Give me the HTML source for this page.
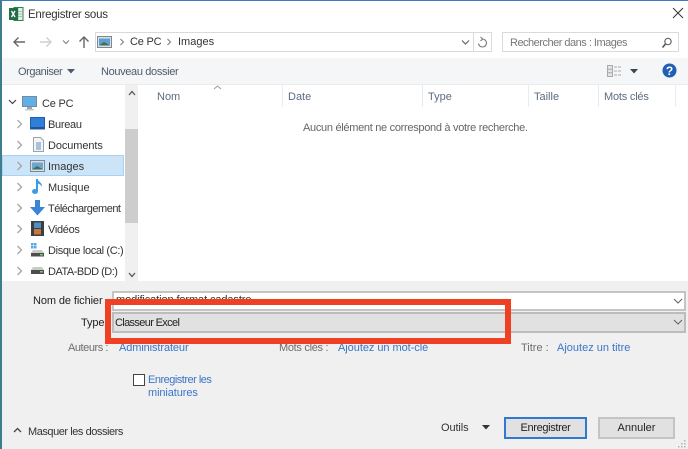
<!DOCTYPE html>
<html><head><meta charset="utf-8">
<style>
html,body{margin:0;padding:0;background:#fff}
#r{position:relative;width:688px;height:449px;overflow:hidden;background:#fff;font-family:"Liberation Sans",sans-serif;font-size:11px;color:#222}
#r div,#r svg{position:absolute}
.t{white-space:nowrap;line-height:14px;filter:blur(.3px)}
.g{color:#6d6d6d}
.l{color:#3a75c8}
.b{border:2px solid #c8c8c8;box-sizing:border-box}
.sep{width:1px;height:22px;top:85px;background:#e8ebf0}
.ch{top:90px;color:#5d6b80;font-size:11px}
</style></head><body>
<div id="r">
<div style="left:0;top:0;width:688px;height:1px;background:#3a7cc2"></div>
<div style="left:0;top:0;width:2px;height:449px;background:#3f7d8c"></div>

<!-- title -->
<svg style="left:8px;top:6px" width="16" height="16" viewBox="0 0 16 16"><rect x="6" y="1.5" width="9" height="13" fill="#e6efe8" stroke="#2f7d50"/><path d="M10 2v12M6 5.5h9M6 8h9M6 10.5h9" stroke="#8db79c" stroke-width=".8"/><rect x="1" y="2" width="9" height="12" fill="#1f7145"/><path d="M3.5 5l3.500 6M7 5l-3.500 6" stroke="#fff" stroke-width="1.300"/></svg>
<div class="t" style="left:28px;top:8px;font-size:11.5px;color:#333;letter-spacing:-.25px">Enregistrer sous</div>
<svg style="left:672px;top:7px" width="12" height="12" viewBox="0 0 12 12"><path d="M1 1l10 10M11 1L1 11" stroke="#333" stroke-width="1"/></svg>

<!-- nav -->
<svg style="left:12px;top:35px" width="14" height="14" viewBox="0 0 14 14"><path d="M13 7H2M6.500 2.500L2 7l4.500 4.500" fill="none" stroke="#666" stroke-width="1.400"/></svg>
<svg style="left:39px;top:35px" width="14" height="14" viewBox="0 0 14 14"><path d="M1 7h11M7.500 2.500L12 7l-4.500 4.500" fill="none" stroke="#cfcfcf" stroke-width="1.400"/></svg>
<svg style="left:62px;top:38px" width="8" height="8" viewBox="0 0 8 8"><path d="M1 2.500l3 3 3-3" fill="none" stroke="#888" stroke-width="1.200"/></svg>
<svg style="left:77px;top:35px" width="14" height="14" viewBox="0 0 14 14"><path d="M7 13V2M2.500 6.500L7 2l4.500 4.500" fill="none" stroke="#666" stroke-width="1.400"/></svg>

<div style="left:95px;top:32px;width:397px;height:20px;box-sizing:border-box;border:1px solid #dadada;background:#fff"></div>
<div style="left:473px;top:33px;width:1px;height:18px;background:#dadada"></div>
<svg style="left:97px;top:36px" width="15" height="12" viewBox="0 0 15 12"><rect x=".5" y=".5" width="14" height="11" fill="#d9dfe6" stroke="#7d8894"/><rect x="2" y="2.500" width="11" height="7" fill="#5f9fd0"/><path d="M2 9.500L7 6l6 3.500z" fill="#3f6f4f"/></svg>
<svg style="left:119px;top:38px" width="6" height="8" viewBox="0 0 6 8"><path d="M1.500 1l3 3-3 3" fill="none" stroke="#777" stroke-width="1"/></svg>
<div class="t" style="left:130px;top:35px;color:#333;letter-spacing:-.2px">Ce PC</div>
<svg style="left:166px;top:38px" width="6" height="8" viewBox="0 0 6 8"><path d="M1.500 1l3 3-3 3" fill="none" stroke="#777" stroke-width="1"/></svg>
<div class="t" style="left:178px;top:35px;color:#333">Images</div>
<svg style="left:461px;top:39px" width="9" height="7" viewBox="0 0 9 7"><path d="M1 1.500l3.500 3.500L8 1.500" fill="none" stroke="#666" stroke-width="1.200"/></svg>
<svg style="left:477px;top:36px" width="11" height="13" viewBox="0 0 11 13"><path d="M5.500 3a4 4 0 1 1-4 4.500M3.500 1l2.200 2-2.200 2" fill="none" stroke="#777" stroke-width="1.100"/></svg>

<div style="left:502px;top:32px;width:177px;height:20px;box-sizing:border-box;border:1px solid #dadada;background:#fff"></div>
<div class="t g" style="left:510px;top:36px;color:#777;letter-spacing:-.5px">Rechercher dans : Images</div>
<svg style="left:661px;top:37px" width="12" height="12" viewBox="0 0 12 12"><circle cx="7" cy="4.500" r="3.200" fill="none" stroke="#666" stroke-width="1.200"/><path d="M4.500 7L1.500 10.500" stroke="#555" stroke-width="1.600"/></svg>

<!-- toolbar -->
<div style="left:2px;top:58px;width:686px;height:26px;background:#f5f6f7"></div>
<div style="left:2px;top:84px;width:686px;height:1px;background:#e9ebee"></div>
<div class="t" style="left:18px;top:65px;color:#4c5a6e;letter-spacing:-.45px">Organiser</div>
<svg style="left:67px;top:69px" width="8" height="5" viewBox="0 0 8 5"><path d="M0 0h8L4 4.500z" fill="#4c5a6e"/></svg>
<div class="t" style="left:101px;top:65px;color:#4c5a6e;letter-spacing:-.35px">Nouveau dossier</div>
<svg style="left:607px;top:65px" width="16" height="12" viewBox="0 0 16 12"><rect x=".5" y=".5" width="5" height="11" fill="#e4e4e4" stroke="#aaa"/><path d="M.5 4.200h5M.5 7.800h5" stroke="#aaa"/><path d="M7 2h8M7 6h8M7 10h8" stroke="#aaa" stroke-dasharray="3 1"/></svg>
<svg style="left:630px;top:69px" width="8" height="5" viewBox="0 0 8 5"><path d="M0 0h8L4 4.500z" fill="#3c4658"/></svg>
<svg style="left:662px;top:63px" width="15" height="15" viewBox="0 0 15 15"><circle cx="7.500" cy="7.500" r="7" fill="#1f5fb4"/></svg>
<div class="t" style="left:662px;top:64px;width:15px;text-align:center;color:#fff;font-weight:bold;font-size:12px">?</div>

<!-- columns -->
<svg style="left:213px;top:85px" width="9" height="5" viewBox="0 0 9 5"><path d="M1 4l3.500-3L8 4" fill="none" stroke="#9a9a9a"/></svg>
<div class="t ch" style="left:157px">Nom</div>
<div class="t ch" style="left:288px">Date</div>
<div class="t ch" style="left:428px">Type</div>
<div class="t ch" style="left:534px">Taille</div>
<div class="t ch" style="left:604px;letter-spacing:-.2px">Mots clés</div>
<div class="sep" style="left:282px"></div>
<div class="sep" style="left:422px"></div>
<div class="sep" style="left:528px"></div>
<div class="sep" style="left:598px"></div>
<div class="sep" style="left:675px"></div>
<div class="t" style="left:303px;top:121px;color:#666;letter-spacing:-.3px">Aucun élément ne correspond à votre recherche.</div>

<!-- scrollbar -->
<div style="left:125px;top:85px;width:13px;height:196px;background:#f0f0f0"></div>
<div style="left:125px;top:129px;width:13px;height:94px;background:#cdcdcd"></div>
<svg style="left:128px;top:90px" width="8" height="6" viewBox="0 0 8 6"><path d="M1 5l3-3.500L7 5" fill="none" stroke="#555" stroke-width="1.300"/></svg>
<svg style="left:128px;top:272px" width="8" height="6" viewBox="0 0 8 6"><path d="M1 1l3 3.500L7 1" fill="none" stroke="#555" stroke-width="1.300"/></svg>

<!-- tree -->
<div style="left:2px;top:155px;width:122px;height:21px;background:#cce4f8;border:1px solid #a9d3f2;box-sizing:border-box"></div>
<svg style="left:8px;top:99px" width="9" height="7" viewBox="0 0 9 7"><path d="M1 1l3.500 3.500L8 1" fill="none" stroke="#444" stroke-width="1.200"/></svg>
<svg style="left:22px;top:96px" width="16" height="15" viewBox="0 0 16 15"><rect x=".5" y=".5" width="14" height="10" fill="#5fb0e8" stroke="#7c8a96"/><rect x="5" y="11" width="5" height="2" fill="#9aa4ad"/><rect x="3" y="13" width="9" height="1.500" fill="#c4cad0"/></svg>
<div class="t" style="left:42px;top:97px;color:#333;letter-spacing:-.2px">Ce PC</div>

<svg style="left:16px;top:120px" width="7" height="165" viewBox="0 0 7 165" fill="none" stroke="#a6a6a6" stroke-width="1.300"><path d="M1.500 0l4 4-4 4M1.500 21l4 4-4 4M1.500 42l4 4-4 4M1.500 63l4 4-4 4M1.500 84l4 4-4 4M1.500 105l4 4-4 4M1.500 126l4 4-4 4M1.500 147l4 4-4 4"/></svg>

<svg style="left:30px;top:117px" width="15" height="13" viewBox="0 0 15 13"><rect x=".5" y=".5" width="14" height="11.500" fill="#2f7fd8" stroke="#1f5fa8"/><rect x="1" y="10" width="13" height="2" fill="#1e5596"/></svg>
<div class="t" style="left:48px;top:118px;color:#333;letter-spacing:-.3px">Bureau</div>

<svg style="left:33px;top:137px" width="11" height="15" viewBox="0 0 11 15"><path d="M.5.500h7l3 3v11H.5z" fill="#f2f4f6" stroke="#9aa4ad"/><path d="M3 6h5M3 8h5M3 10h5M3 12h5" stroke="#5f90c0"/></svg>
<div class="t" style="left:48px;top:139px;color:#333;letter-spacing:-.1px">Documents</div>

<svg style="left:30px;top:160px" width="15" height="12" viewBox="0 0 15 12"><rect x=".5" y=".5" width="14" height="11" fill="#d9dfe6" stroke="#7d8894"/><rect x="2" y="2.500" width="11" height="7" fill="#6ca6d2"/><path d="M2 9.500L7 6l6 3.500z" fill="#3f6f4f"/></svg>
<div class="t" style="left:48px;top:160px;color:#333">Images</div>

<svg style="left:31px;top:178px" width="13" height="17" viewBox="0 0 13 17"><path d="M6 1v12" stroke="#3d9ae8" stroke-width="2"/><ellipse cx="4" cy="13.500" rx="3" ry="2.500" fill="#3d9ae8"/><path d="M6.500 1c1 3 5 3.500 4.500 8-1-2.500-3-3-4.500-3.500z" fill="#3d9ae8"/></svg>
<div class="t" style="left:48px;top:181px;color:#333">Musique</div>

<svg style="left:30px;top:200px" width="15" height="16" viewBox="0 0 15 16"><path d="M5 0h5v7h5l-7.500 8.500L0 7h5z" fill="#3b84d8"/></svg>
<div class="t" style="left:48px;top:202px;color:#333;letter-spacing:-.5px">Téléchargement</div>

<svg style="left:31px;top:221px" width="13" height="15" viewBox="0 0 13 15"><rect width="13" height="15" fill="#3a3f45"/><rect x="3" y="1.500" width="7" height="5.500" fill="#4f8fc8"/><rect x="3" y="8" width="7" height="5.500" fill="#c8763a"/></svg>
<div class="t" style="left:48px;top:223px;color:#333;letter-spacing:-.3px">Vidéos</div>

<svg style="left:30px;top:242px" width="15" height="15" viewBox="0 0 15 15"><rect x="1" y="1" width="2.500" height="2.500" fill="#55a8e8"/><rect x="4" y="1" width="2.500" height="2.500" fill="#55a8e8"/><rect x="1" y="4" width="2.500" height="2.500" fill="#55a8e8"/><rect x="4" y="4" width="2.500" height="2.500" fill="#55a8e8"/><path d="M3 8h9l2 3H1z" fill="#c9c9c9"/><rect x="1" y="11" width="13" height="3.500" fill="#4d4d4d"/><rect x="10" y="12" width="3" height="1.500" fill="#6fcf5f"/></svg>
<div class="t" style="left:48px;top:244px;color:#333;letter-spacing:-.35px">Disque local (C:)</div>

<svg style="left:30px;top:264px" width="15" height="12" viewBox="0 0 15 12"><path d="M3 3h9l2 3H1z" fill="#c9c9c9"/><rect x="1" y="6" width="13" height="4" fill="#4d4d4d"/><rect x="10" y="7" width="3" height="1.500" fill="#6fcf5f"/></svg>
<div class="t" style="left:48px;top:265px;color:#333;letter-spacing:-.5px">DATA-BDD (D:)</div>

<!-- bottom panel -->
<div style="left:2px;top:281px;width:686px;height:168px;background:#f0f0f0"></div>
<div class="t" style="left:33px;top:294px;color:#222;letter-spacing:-.1px">Nom de fichier</div>
<div class="b" style="left:112px;top:291px;width:574px;height:20px;background:#fff;border-color:#c4c4c4"></div>
<div class="t" style="left:116px;top:293px;color:#333;letter-spacing:-.1px">modification format cadastre</div>
<svg style="left:673px;top:298px" width="10" height="7" viewBox="0 0 10 7"><path d="M1 1l4 4 4-4" fill="none" stroke="#666" stroke-width="1.100"/></svg>
<div class="t" style="left:81px;top:316px;color:#222;letter-spacing:-.1px">Type</div>
<div class="b" style="left:112px;top:312px;width:574px;height:21px;background:#e1e1e1;border-color:#bcbcbc"></div>
<div class="t" style="left:115px;top:316px;color:#222;letter-spacing:-.65px">Classeur Excel</div>
<svg style="left:673px;top:319px" width="10" height="7" viewBox="0 0 10 7"><path d="M1 1l4 4 4-4" fill="none" stroke="#666" stroke-width="1.100"/></svg>

<div class="t g" style="left:68px;top:341px;letter-spacing:-.45px">Auteurs :</div>
<div class="t l" style="left:119px;top:341px;letter-spacing:-.1px">Administrateur</div>
<div class="t g" style="left:279px;top:341px;letter-spacing:-.3px">Mots clés :</div>
<div class="t l" style="left:338px;top:341px;letter-spacing:-.05px">Ajoutez un mot-clé</div>
<div class="t g" style="left:521px;top:341px">Titre :</div>
<div class="t l" style="left:557px;top:341px">Ajoutez un titre</div>

<div style="left:133px;top:374px;width:12px;height:12px;box-sizing:border-box;border:1px solid #444;background:#fff"></div>
<div class="t l" style="left:148px;top:373px;letter-spacing:-.5px">Enregistrer les</div>
<div class="t l" style="left:148px;top:386px;letter-spacing:-.1px">miniatures</div>

<svg style="left:13px;top:427px" width="9" height="6" viewBox="0 0 9 6"><path d="M1 5l3.500-3.500L8 5" fill="none" stroke="#444" stroke-width="1.300"/></svg>
<div class="t" style="left:28px;top:425px;color:#333;letter-spacing:-.45px">Masquer les dossiers</div>

<div class="t" style="left:441px;top:421px;color:#333;letter-spacing:-.1px">Outils</div>
<svg style="left:482px;top:425px" width="8" height="5" viewBox="0 0 8 5"><path d="M0 0h8L4 4.500z" fill="#333"/></svg>
<div class="b" style="left:504px;top:417px;width:83px;height:22px;background:#e1e1e1;border-color:#2f7ad0"></div>
<div class="t" style="left:504px;top:421px;width:83px;text-align:center;color:#222;letter-spacing:-.35px">Enregistrer</div>
<div class="b" style="left:598px;top:417px;width:77px;height:22px;background:#e1e1e1;border-color:#c4c4c4"></div>
<div class="t" style="left:598px;top:421px;width:77px;text-align:center;color:#222">Annuler</div>
<svg style="left:677px;top:439px" width="10" height="9" viewBox="0 0 10 9" fill="#b5b5b5"><rect x="7" y="1" width="1.500" height="1.500"/><rect x="4" y="4" width="1.500" height="1.500"/><rect x="7" y="4" width="1.500" height="1.500"/><rect x="1" y="7" width="1.500" height="1.500"/><rect x="4" y="7" width="1.500" height="1.500"/><rect x="7" y="7" width="1.500" height="1.500"/></svg>

<!-- red annotation -->
<div style="left:105px;top:299px;width:406px;height:45px;box-sizing:border-box;border:6.500px solid #ef4023"></div>
</div>
</body></html>
